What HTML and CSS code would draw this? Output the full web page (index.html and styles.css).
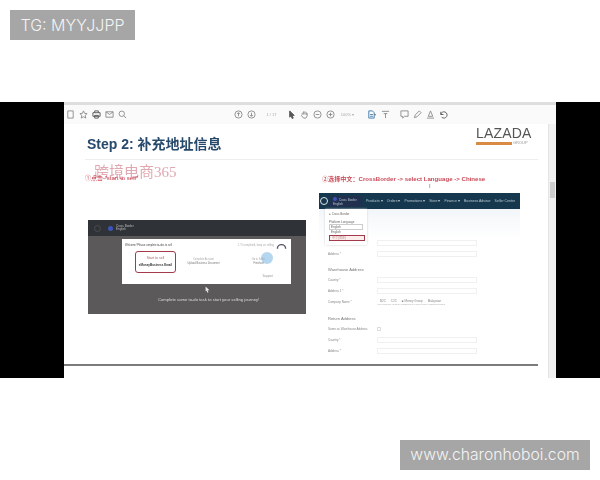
FILE: index.html
```html
<!DOCTYPE html>
<html lang="zh">
<head>
  <meta charset="UTF-8" />
  <title>Step 2</title>
  <link rel="stylesheet" href="styles.css">
</head>
<body>

<div class="top">
  <div class="tag tag-tg">TG: MYYJJPP</div>
</div>

<div class="video">
  <div class="slide">
    <div class="strip"></div>

    <!-- pdf toolbar -->
    <div class="toolbar">
      <svg class="ico" viewBox="0 0 10 10"><path d="M2 1h6v8H2z"/></svg>
      <svg class="ico" viewBox="0 0 10 10"><path d="M5 1l1.2 2.7 2.8.3-2.1 2 .6 3L5 7.500 2.500 9l.6-3L1 4l2.800-.3z"/></svg>
      <svg class="ico dark" viewBox="0 0 10 10"><path d="M3 3V1h4v2M1 3h8v4H1zM3 6h4v3H3z"/></svg>
      <svg class="ico" viewBox="0 0 10 10"><path d="M1 2h8v6H1zM1 2l4 3 4-3"/></svg>
      <svg class="ico" viewBox="0 0 10 10"><circle cx="4.200" cy="4.200" r="3"/><path d="M6.500 6.500L9 9"/></svg>
      <span class="gap-a"></span>
      <svg class="ico" viewBox="0 0 10 10"><circle cx="5" cy="5" r="4"/><path d="M5 7V3M3.500 4.500L5 3l1.500 1.500"/></svg>
      <svg class="ico" viewBox="0 0 10 10"><circle cx="5" cy="5" r="4"/><path d="M5 3v4M3.500 5.500L5 7l1.500-1.500"/></svg>
      <span class="page-no">1 / 17</span>
      <svg class="ico dark" viewBox="0 0 10 10"><path class="solid" d="M3 1l5 5H5.500L7 9 5.800 9.500 4.300 6.500 3 8z"/></svg>
      <svg class="ico" viewBox="0 0 10 10"><path d="M2.500 5V3M4 5V1.500M5.500 5V1.500M7 5V2.500M7 5l1-1v2.500L6.500 9H4L1.500 6l1-1"/></svg>
      <svg class="ico" viewBox="0 0 10 10"><circle cx="5" cy="5" r="4"/><path d="M3 5h4"/></svg>
      <svg class="ico" viewBox="0 0 10 10"><circle cx="5" cy="5" r="4"/><path d="M3 5h4M5 3v4"/></svg>
      <span class="zoom-no">100% ▾</span>
      <svg class="ico blue" viewBox="0 0 10 10"><path d="M2 1h4l2 2v6H2zM3.500 5h3M3.500 7h3"/></svg>
      <span class="caret">▾</span>
      <svg class="ico" viewBox="0 0 10 10"><path d="M1 1.500h8M3 4h4M5 4v5"/></svg>
      <span class="gap-b"></span>
      <svg class="ico" viewBox="0 0 10 10"><path d="M1 1h8v6H5L3 9V7H1z"/></svg>
      <svg class="ico" viewBox="0 0 10 10"><path d="M1.500 8.500l1-3L7 1l2 2-4.500 4.500z"/></svg>
      <svg class="ico" viewBox="0 0 10 10"><path d="M5 1L2.500 7h5zM1 9h8"/></svg>
      <svg class="ico dark" viewBox="0 0 10 10"><path d="M2 2v3h3M2 5a3.500 3.500 0 1 1 1 3"/></svg>
    </div>

    <div class="page">
      <div class="doc">
        <div class="doc-head">
          <h1>Step 2: 补充地址信息</h1>
          <div class="logo">
            <div class="logo-name">LAZADA</div>
            <div class="logo-sub"><span class="logo-bar"></span><span>GROUP</span></div>
          </div>
        </div>
        <div class="rule"></div>

        <div class="cols">
          <div class="col-left">
            <div class="stamp">跨境电商365</div>
            <div class="note note-left">①点击 "start to sell"</div>

            <div class="dark-panel">
              <div class="dark-head">
                <span class="dark-logo"></span>
                <span class="flag"></span>
                <span class="dark-name">Cross Border<br>English</span>
              </div>
              <div class="panel-body">
                <div class="steps-card">
                  <div class="steps-top">
                    <span>Welcome! Please complete to-dos to sell</span>
                    <span class="gauge-text">1 / 3 completed, keep on selling
                      <svg class="gauge" viewBox="0 0 12 8"><path d="M1.500 7a4.500 4.500 0 0 1 9 0"/></svg>
                    </span>
                  </div>
                  <div class="steps">
                    <div class="step-box">
                      <div class="step-small">Start to sell</div>
                      <div class="step-main">eMoneyBusiness Email</div>
                    </div>
                    <div class="step">Complete Account<br><b>Upload Business Document</b></div>
                    <div class="step step-last"><span class="blue-dot"></span>Go to Seller<br><b>Finished</b></div>
                  </div>
                  <div class="card-foot">Support</div>
                </div>
                <svg class="pointer" viewBox="0 0 8 10"><path d="M1 0l6 6H4l1.500 3.500L4 10 2.500 6.500 1 8z"/></svg>
                <div class="panel-line">Complete some to-do task to start your selling journey!</div>
              </div>
            </div>
          </div>

          <div class="col-right">
            <div class="note note-right">②选择中文：CrossBorder -&gt; select Language -&gt; Chinese</div>
            <div class="i-beam">I</div>

            <div class="seller">
              <div class="nav">
                <span class="nav-logo"></span>
                <span class="nav-user"><span class="flag"></span>Cross Border<br>English</span>
                <span>Products ▾</span>
                <span>Orders ▾</span>
                <span>Promotions ▾</span>
                <span>Store ▾</span>
                <span>Finance ▾</span>
                <span>Business Advisor</span>
                <span>Seller Center</span>
              </div>

              <div class="lang-menu">
                <div class="lang-user">● Cross Border</div>
                <div class="lang-title">Platform Language</div>
                <div class="lang-select">English</div>
                <div class="lang-opt">English</div>
                <div class="lang-opt lang-picked">中文(简体)</div>
              </div>

              <div class="form">
                <div class="row"><span>Name *</span><i></i></div>
                <div class="row"><span>Address *</span><i></i></div>
                <div class="form-title">Warehouse Address</div>
                <div class="row"><span>Country *</span><i></i></div>
                <div class="row"><span>Address 1 *</span><i></i></div>
                <div class="row">
                  <span>Company Name *</span>
                  <div>
                    <div class="radios"><b>B2C</b><b>C2C</b><b>■ Money Group</b><b>Malaysian</b></div>
                    <div class="hint">Your company must be registered in Hong Kong or mainland China</div>
                  </div>
                </div>
                <div class="form-title">Return Address</div>
                <div class="row"><span>Same as Warehouse Address</span><em></em></div>
                <div class="row"><span>Country *</span><i></i></div>
                <div class="row"><span>Address *</span><i></i></div>
              </div>
            </div>
          </div>
        </div>
      </div>

      <div class="scroll"><span></span></div>
    </div>
  </div>
</div>

<div class="bottom">
  <div class="tag tag-site">www.charonhoboi.com</div>
</div>

</body>
</html>
```

FILE: styles.css
```css
* {
  box-sizing: border-box;
}

body {
  margin: 0;
  width: 600px;
  height: 480px;
  overflow: hidden;
  background: #fff;
  font-family: "Liberation Sans", "Noto Sans CJK SC", sans-serif;
}

/* grey labels */
.top {
  height: 102px;
  padding: 10px;
}

.bottom {
  height: 102px;
  padding: 62px 10px 0;
  display: flex;
  justify-content: flex-end;
}

.tag {
  height: 30px;
  line-height: 30px;
  background: #a6a6a6;
  color: #f4f4f4;
  font-family: Inter, "Liberation Sans", sans-serif;
  font-weight: 300;
  text-align: center;
}

.tag-tg {
  width: 125px;
  font-size: 16px;
}

.tag-site {
  width: 190px;
  font-size: 15.700px;
}

/* video */
.video {
  height: 276px;
  background: #000;
  padding-left: 64px;
  overflow: hidden;
}

.slide {
  width: 492px;
  height: 276px;
  background: #fff;
  display: flex;
  flex-direction: column;
  filter: blur(0.5px);
}

.strip {
  height: 3px;
  background: #dedede;
}

.toolbar {
  height: 19px;
  flex: none;
  background: #fafafa;
  display: flex;
  align-items: center;
}

.ico {
  width: 9px;
  height: 9px;
  margin: 0 2px;
  flex: none;
  fill: none;
  stroke: #8a8a8a;
  stroke-width: 1;
}

.ico.dark {
  stroke: #555;
}

.ico.blue {
  stroke: #3b78a8;
}

.ico .solid {
  fill: #555;
}

.gap-a {
  width: 103px;
}

.gap-b {
  width: 6px;
}

.page-no,
.zoom-no {
  font-size: 4px;
  color: #aaa;
  width: 27px;
  text-align: center;
}

.zoom-no {
  width: 21px;
  margin-right: 7px;
}

.caret {
  font-size: 4px;
  color: #777;
  width: 3px;
  margin: 0 2px 0 -4px;
}

.page {
  flex: 1;
  min-height: 0;
  display: flex;
  overflow: hidden;
}

.doc {
  width: 484px;
  padding: 2px 10px 0 21px;
  position: relative;
}

/* line at the foot of the slide */
.doc::after {
  content: "";
  position: absolute;
  left: 0;
  right: 10px;
  top: 240px;
  height: 2px;
  background: #7c7c7c;
}

.doc-head {
  height: 33px;
  display: flex;
  justify-content: space-between;
  align-items: flex-start;
}

h1 {
  margin: 10px 0 0 2px;
  font-size: 14px;
  line-height: 16px;
  color: #27496b;
}

.logo {
  width: 57px;
  margin-right: 5px;
}

.logo-name {
  font-size: 14px;
  line-height: 15px;
  color: #555;
  letter-spacing: 0.2px;
}

.logo-sub {
  display: flex;
  align-items: center;
  gap: 1px;
  font-size: 4px;
  color: #999;
  line-height: 4px;
}

.logo-bar {
  width: 36px;
  height: 3px;
  background: #d98a45;
}

.rule {
  height: 1px;
  background: #eee;
}

.cols {
  display: flex;
}

.col-left {
  width: 234px;
  padding-top: 4px;
  flex: none;
}

.col-right {
  flex: 1;
  position: relative;
}

.stamp {
  margin-left: 9px;
  font-family: "Liberation Serif", "Noto Sans CJK SC", serif;
  font-size: 15px;
  line-height: 16px;
  color: #e0a9b2;
}

.note {
  color: #c8394a;
  white-space: nowrap;
}

.note-left {
  font-size: 6px;
  line-height: 7px;
  margin-top: -5px;
}

.dark-panel {
  margin: 38px 0 0 3px;
  width: 218px;
  height: 94px;
  background: #5b5959;
  display: flex;
  flex-direction: column;
}

.dark-head {
  height: 16px;
  background: #2f3337;
  display: flex;
  align-items: center;
  padding-left: 6px;
  gap: 3px;
}

.dark-logo {
  width: 7px;
  height: 7px;
  margin-right: 4px;
  border: 1px solid #4a4d50;
  border-radius: 50%;
}

.flag {
  display: inline-block;
  width: 5px;
  height: 5px;
  border-radius: 50%;
  background: #3d55b8;
}

.dark-name {
  font-size: 3px;
  line-height: 3.500px;
  color: #bbb;
}

.panel-body {
  flex: 1;
  display: flex;
  flex-direction: column;
  align-items: flex-start;
  position: relative;
  padding-top: 3px;
}

.steps-card {
  width: 169px;
  height: 45px;
  background: #fff;
  padding: 5px 3px 0;
  font-size: 3px;
  color: #666;
  margin-left: 34px;
}

.steps-top {
  display: flex;
  justify-content: space-between;
  font-size: 2.600px;
  color: #444;
}

.gauge-text {
  color: #aaa;
  position: relative;
  padding-right: 14px;
}

.gauge {
  position: absolute;
  right: 1px;
  top: -2px;
  width: 11px;
  height: 8px;
  fill: none;
  stroke: #556;
  stroke-width: 1.500;
}

.steps {
  display: flex;
  align-items: center;
  margin-top: 4px;
  padding-left: 10px;
}

.step-box {
  width: 41px;
  height: 22px;
  border: 1.500px solid #a33a4a;
  border-radius: 3px;
  text-align: center;
  padding-top: 4px;
  flex: none;
}

.step-small {
  color: #a66;
  font-size: 3.500px;
}

.step-main {
  color: #333;
  font-size: 3px;
  font-weight: bold;
  margin-top: 3px;
  white-space: nowrap;
}

.step {
  width: 55px;
  text-align: center;
  font-size: 2.600px;
  line-height: 4px;
  color: #aaa;
}

.step b {
  color: #777;
  font-weight: normal;
}

.step-last {
  position: relative;
}

.blue-dot {
  position: absolute;
  top: -6px;
  left: 30px;
  width: 12px;
  height: 12px;
  border-radius: 50%;
  background: rgba(120, 180, 225, 0.55);
}

.card-foot {
  text-align: right;
  padding-right: 15px;
  font-size: 3px;
  color: #999;
  margin-top: 1px;
}

.pointer {
  position: absolute;
  left: 117px;
  top: 50px;
  width: 5px;
  height: 7px;
  fill: #eee;
}

.panel-line {
  margin: 13px 0 0 70px;
  font-size: 4.200px;
  color: #ddd;
  white-space: nowrap;
}

.note-right {
  position: absolute;
  left: 3px;
  top: 14px;
  font-size: 6.100px;
  font-weight: bold;
  line-height: 9px;
  color: #c94a58;
}

.i-beam {
  position: absolute;
  left: 110px;
  top: 23px;
  font-size: 6px;
  line-height: 7px;
  color: #777;
}

.seller {
  position: absolute;
  left: 0;
  top: 33px;
  width: 201px;
  font-size: 3.500px;
  color: #888;
}

.nav {
  height: 16px;
  background: #16384e;
  color: #b9c7d1;
  display: flex;
  align-items: center;
  gap: 4px;
  padding-left: 1px;
  white-space: nowrap;
  overflow: hidden;
}

.nav-logo {
  width: 8px;
  height: 8px;
  margin-right: -2px;
  border: 1px solid #dfe6ea;
  border-radius: 50%;
  flex: none;
}

.nav-user {
  width: 32px;
  flex: none;
  background: #22304f;
  line-height: 4px;
  padding: 1px 0 1px 3px;
  font-size: 3px;
}

.nav-user .flag {
  margin-right: 2px;
  width: 4px;
  height: 4px;
}

.lang-menu {
  position: absolute;
  left: 6px;
  top: 16px;
  width: 42px;
  height: 36px;
  background: #fff;
  box-shadow: 0 0 2px #ccc;
  padding: 3px 2px 0 4px;
  font-size: 3px;
  line-height: 4px;
  color: #666;
}

.lang-user {
  margin-bottom: 4px;
}

.lang-select {
  border: 1px solid #ccc;
  width: 34px;
  height: 6px;
  line-height: 4px;
  padding-left: 1px;
}

.lang-opt {
  height: 5px;
  padding-left: 2px;
}

.lang-picked {
  height: 6px;
  border: 1px solid #a33a4a;
  background: #fdeeee;
  line-height: 4px;
  color: #b88;
}

.form {
  padding: 28px 0 0 9px;
  background: linear-gradient(#f3f6f9, #fff 30px);
}

.row {
  display: flex;
  height: 11px;
  align-items: center;
}

.row span {
  width: 49px;
  flex: none;
  font-size: 3px;
  white-space: nowrap;
}

.row i {
  width: 100px;
  height: 6px;
  border: 1px solid #f0f0f0;
}

.row em {
  width: 4px;
  height: 4px;
  border: 1px solid #ddd;
}

.form-title {
  font-size: 4px;
  line-height: 6px;
  color: #777;
  margin: 8px 0 1.500px;
}

.radios {
  display: flex;
  gap: 5px;
  margin-left: 3px;
  font-size: 3px;
  line-height: 4px;
  color: #888;
}

.radios b {
  font-weight: normal;
}

.hint {
  font-size: 2.300px;
  line-height: 3px;
  color: #aaa;
  white-space: nowrap;
}

.scroll {
  width: 8px;
  background: #f1f1f1;
  border-left: 1px solid #e4e4e4;
  padding: 58px 1px 0;
}

.scroll span {
  display: block;
  height: 16px;
  background: #cfcfcf;
}
```
